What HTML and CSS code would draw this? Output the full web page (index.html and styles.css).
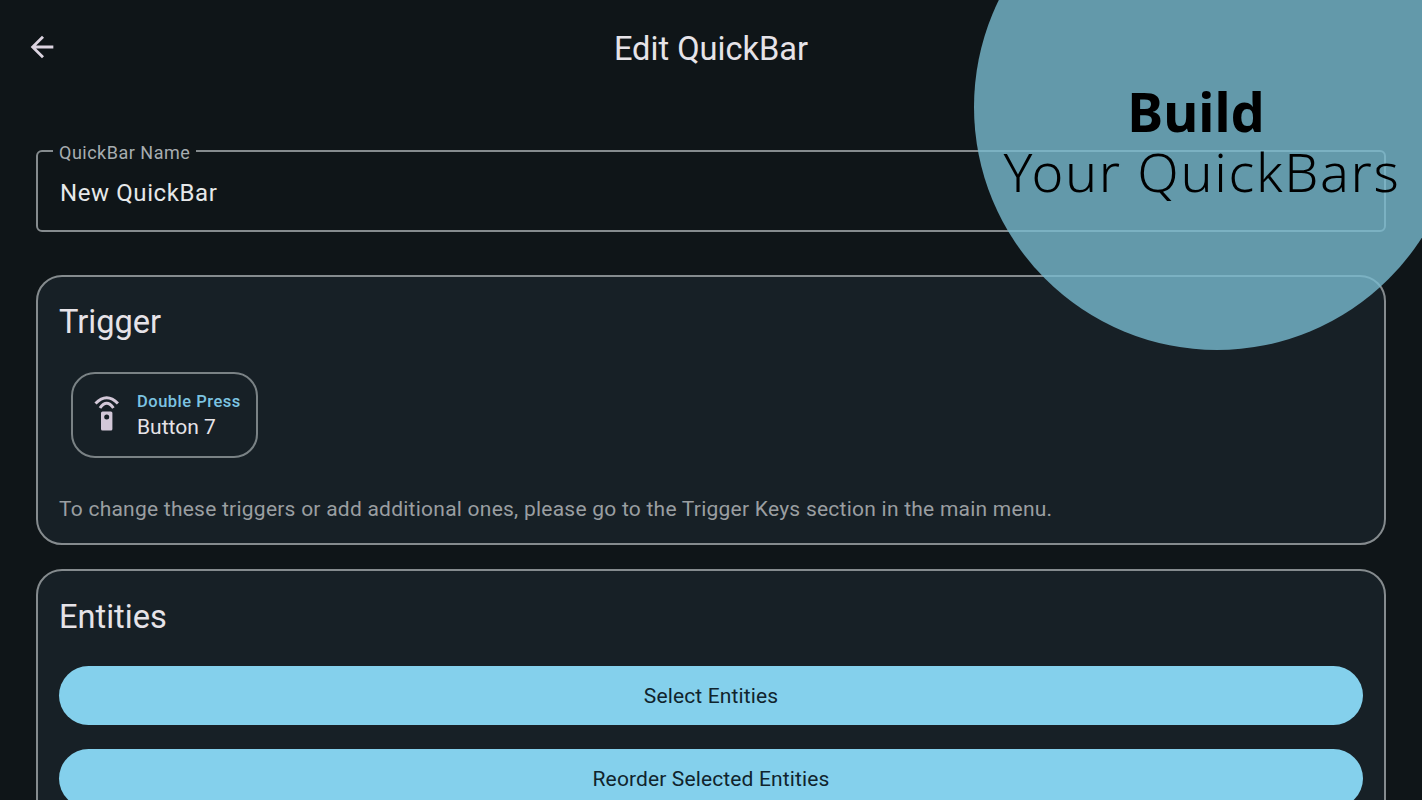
FILE: index.html
```html
<!DOCTYPE html>
<html lang="en">
<head>
<meta charset="utf-8">
<title>Edit QuickBar</title>
<link rel="stylesheet" href="styles.css">
</head>
<body>
<div class="screen">
  <header class="topbar">
    <svg class="back" viewBox="0 0 24 24" width="34" height="34" aria-hidden="true"><path d="M20 11H7.83l5.59-5.59L12 4l-8 8 8 8 1.41-1.41L7.83 13H20v-2z"/></svg>
    <h1 class="title">Edit QuickBar</h1>
  </header>
  <main class="content">
    <fieldset class="field">
      <legend class="field-label">QuickBar Name</legend>
      <div class="field-value">New QuickBar</div>
    </fieldset>
    <section class="card trigger-card">
      <h2 class="card-title">Trigger</h2>
      <div class="chip">
        <svg class="remote" viewBox="0 0 28 40" width="28" height="40" aria-hidden="true">
          <path class="arc" d="M2.500 8.500Q13.700 -3 24.900 8.500"/>
          <path class="arc" d="M7 13Q13.700 3.500 20.400 13"/>
          <path class="body" fill-rule="evenodd" d="M9.500 16.500h8.400a1.500 1.500 0 0 1 1.500 1.500v16a1.500 1.500 0 0 1-1.500 1.500H9.500A1.500 1.500 0 0 1 8 34V18a1.500 1.500 0 0 1 1.500-1.500zM13.700 19.500a2.500 2.500 0 1 0 0 5 2.500 2.500 0 0 0 0-5z"/>
        </svg>
        <div class="chip-text">
          <div class="chip-kind">Double Press</div>
          <div class="chip-name">Button 7</div>
        </div>
      </div>
      <p class="hint">To change these triggers or add additional ones, please go to the Trigger Keys section in the main menu.</p>
    </section>
    <section class="card entities-card">
      <h2 class="card-title">Entities</h2>
      <div class="btn">Select Entities</div>
      <div class="btn">Reorder Selected Entities</div>
    </section>
  </main>
  <div class="promo">
    <div class="promo-text">
      <div class="promo-bold">Build</div>
      <div class="promo-light">Your QuickBars</div>
    </div>
  </div>
</div>
</body>
</html>
```
FILE: styles.css
```css
* { box-sizing: border-box; }
html, body { margin: 0; height: 100%; }
body { background: #0f1518; font-family: Roboto, "Liberation Sans", sans-serif; overflow: hidden; }
.screen { position: relative; width: 1422px; height: 800px; overflow: hidden; }

.topbar { position: relative; display: flex; align-items: center; justify-content: center; height: 96px; }
.back { position: absolute; left: 25px; top: 30px; fill: #dcd4e0; }
.title { margin: 0; font-size: 32.600px; font-weight: 400; color: #e6e3e8; line-height: 40px; position: relative; top: 1px; }

.content { display: flex; flex-direction: column; padding: 0 36px; }

.field { margin: 44px 0 0; padding: 0; height: 92px; border: 2px solid #858b8e; border-radius: 6px; min-width: 0; }
.field-label { margin-left: 15px; padding: 4px 6px 0; font-size: 18px; line-height: 18px; letter-spacing: 0.500px; color: #a7adb0; }
.field-value { padding: 15px 0 0 22px; font-size: 24px; line-height: 32px; letter-spacing: 0.600px; color: #e6e8e9; }

.card { background: #172026; border: 2px solid #858b8e; border-radius: 26px; padding: 0 21px; }
.trigger-card { margin-top: 43px; height: 270px; }
.entities-card { margin-top: 24px; height: 300px; }
.card-title { margin: 0; padding-top: 25px; font-size: 32.600px; line-height: 40px; font-weight: 400; color: #e6e3e8; }
.entities-card .card-title { padding-top: 26px; }

.chip { display: flex; align-items: center; width: 187px; height: 86px; margin: 30px 0 0 12px; padding-left: 20px; border: 2px solid #7a8285; border-radius: 24px; }
.remote { flex: none; }
.arc { fill: none; stroke: #d3c8d8; stroke-width: 3; }
.body { fill: #d3c8d8; }
.chip-text { margin-left: 16px; padding-top: 2px; }
.chip-kind { font-size: 16.500px; line-height: 20px; font-weight: 500; letter-spacing: 0.500px; color: #7cc4e2; }
.chip-name { margin-top: 2px; font-size: 21px; line-height: 26px; color: #e6e3e8; }

.hint { margin: 37px 0 0; font-size: 21px; line-height: 28px; letter-spacing: 0.240px; color: #9a9ea1; }

.btn { display: flex; align-items: center; justify-content: center; height: 59px; margin-bottom: 24px; border-radius: 30px; background: #84d0ec; color: #10242d; font-size: 21px; font-weight: 400; letter-spacing: 0.130px; }
.entities-card .card-title + .btn { margin-top: 29px; }

.promo { position: absolute; left: 974px; top: -136px; width: 486px; height: 486px; border-radius: 50%; background: rgba(120, 186, 208, 0.800); }
.promo-text { position: absolute; left: 0; top: 217px; width: 444px; text-align: center; color: #000; font-family: "Noto Sans", "Open Sans", sans-serif; }
.promo-bold { font-size: 54px; line-height: 60px; font-weight: 700; }
.promo-light { font-size: 54px; line-height: 60px; font-weight: 300; letter-spacing: 1.650px; padding-left: 12px; white-space: nowrap; }
```
